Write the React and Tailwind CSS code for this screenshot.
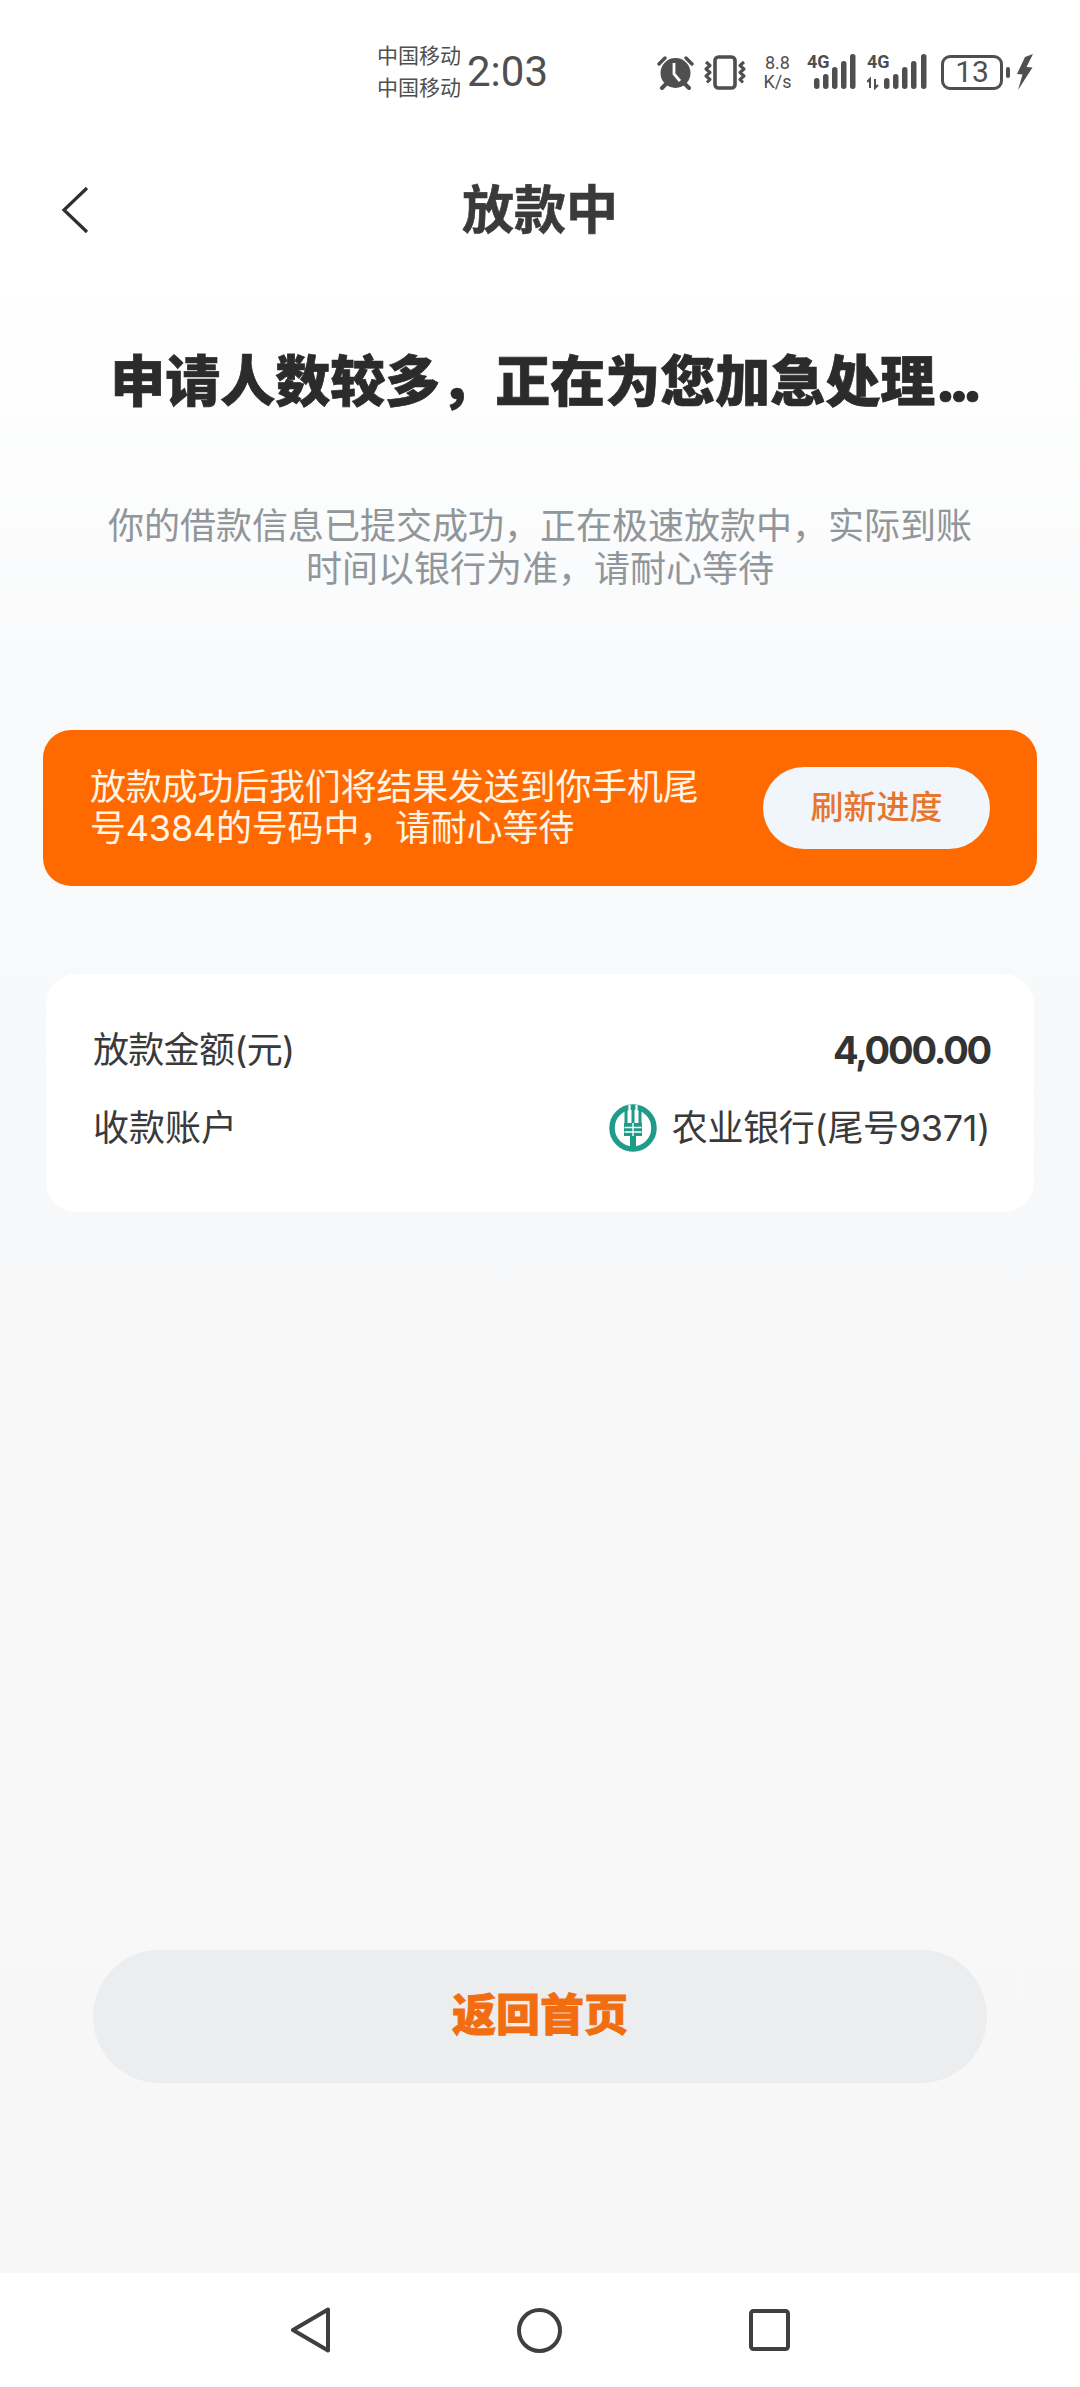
const cjk = "font-['Inter','Noto_Sans_CJK_SC',sans-serif]";

function Alarm() {
  return (
    <svg width="37" height="35" viewBox="0 0 37 35" fill="none">
      <circle cx="18.500" cy="18" r="15" fill="#4f4f4f" />
      <path d="M17 8v11l6 7" stroke="#fff" strokeWidth="2.800" fill="none" />
      <path d="M2 9 8 3M35 9 29 3" stroke="#4f4f4f" strokeWidth="3.400" strokeLinecap="round" />
      <path d="M9 29l-4 4M28 29l4 4" stroke="#4f4f4f" strokeWidth="4" strokeLinecap="round" />
    </svg>
  );
}

function Vibrate() {
  return (
    <svg width="42" height="35" viewBox="0 0 42 35" fill="none" stroke="#4f4f4f">
      <rect x="11" y="2" width="20" height="31" rx="3.500" strokeWidth="3.600" />
      <path d="M2 7l4 3.500-4 3.500 4 3.500-4 3.500 4 3.500-3 3" strokeWidth="3" strokeLinejoin="round" />
      <path d="M40 7l-4 3.500 4 3.500-4 3.500 4 3.500-4 3.500 3 3" strokeWidth="3" strokeLinejoin="round" />
    </svg>
  );
}

function Signal({ width, bars, arrows }) {
  return (
    <div className="relative h-[36px]" style={{ width }}>
      <span className="absolute left-0 top-[-2px] font-['Roboto',sans-serif] text-[18px] leading-[20px] font-bold text-[#4f4f4f]">4G</span>
      <svg className="absolute left-0 top-0" width={width} height="36" viewBox={`0 0 ${width} 36`} fill="#4f4f4f">
        {arrows && <path d="M3 34v-9l-3 3M8 25v9l3-3" stroke="#4f4f4f" strokeWidth="2" fill="none" />}
        {bars.map(([x, h]) => (
          <rect key={x} x={x} y={35 - h} width="5.500" height={h} rx="2.700" />
        ))}
      </svg>
    </div>
  );
}

function Battery() {
  return (
    <div className="flex items-center">
      <div className="flex h-[35px] w-[62px] items-center justify-center rounded-[9px] border-[3px] border-[#4f4f4f] font-['Roboto',sans-serif] text-[30px] leading-none text-[#4f4f4f]">
        13
      </div>
      <div className="ml-[3px] h-[11px] w-[4px] rounded-full bg-[#4f4f4f]" />
    </div>
  );
}

function Bolt() {
  return (
    <svg width="16" height="36" viewBox="0 0 16 36" fill="#4f4f4f">
      <path d="M16 0 9.500 13 15.500 13.500 1 36 5.500 20.500 0 20 8 3z" />
    </svg>
  );
}

function AbcLogo() {
  return (
    <svg width="48" height="48" viewBox="0 0 48 48" fill="none">
      <circle cx="24" cy="24" r="21" stroke="#1f9c89" strokeWidth="5.500" />
      <path d="M24 46V32" stroke="#1f9c89" strokeWidth="6" />
      <rect x="15" y="19" width="18" height="13" fill="#1f9c89" />
      <path d="M15.500 23.500h17M15.500 28h17M24 19v13" stroke="#fff" strokeWidth="1.400" />
      <path d="M17 3v16M31 3v16M24 1v18" stroke="#1f9c89" strokeWidth="3" />
      <path d="M20.500 1v15M27.500 1v15" stroke="#fff" strokeWidth="2.200" />
    </svg>
  );
}

export default function App() {
  return (
    <div className={`flex h-[2387px] w-[1080px] flex-col overflow-hidden bg-[linear-gradient(180deg,#ffffff_0%,#ffffff_12%,#f9fafb_28%,#f7f8f9_50%,#f7f7f8_100%)] ${cjk}`}>
      <div className="flex h-[144px] shrink-0 items-center pl-[377px]">
        <div className="flex flex-col text-[21px] leading-[32px] text-[#4f4f4f]">
          <span>中国移动</span>
          <span>中国移动</span>
        </div>
        <span className="ml-[6px] font-['Roboto',sans-serif] text-[42px] leading-none text-[#4f4f4f]">2:03</span>
        <div className="ml-[109px] flex items-center">
          <Alarm />
          <div className="ml-[10px]"><Vibrate /></div>
          <div className="ml-[15px] flex w-[33px] flex-col items-center font-['Roboto',sans-serif] text-[18px] leading-[19px] text-[#4f4f4f]">
            <span>8.8</span>
            <span>K/s</span>
          </div>
          <div className="ml-[13px]">
            <Signal width={49} bars={[[7, 11], [16, 15], [25, 22], [34, 28], [43, 35]]} />
          </div>
          <div className="ml-[11px]">
            <Signal width={61} bars={[[17, 11], [26, 15], [35, 22], [44, 28], [54, 35]]} arrows />
          </div>
          <div className="ml-[13px]"><Battery /></div>
          <div className="ml-[7px]"><Bolt /></div>
        </div>
      </div>

      <div className="relative flex h-[134px] shrink-0 items-center justify-center">
        <svg className="absolute left-[61px] top-[42px]" width="28" height="48" viewBox="0 0 28 48" fill="none">
          <path d="M26 2 3 24l23 22" stroke="#2f2f2f" strokeWidth="3.200" />
        </svg>
        <span className="text-[52px] leading-none font-bold text-[#3a3a3a] [-webkit-text-stroke:0.6px_#3a3a3a]">放款中</span>
      </div>

      <h1 className="mt-[68px] pl-[6px] text-center text-[55px] leading-[70px] font-black text-[#2b2b2b] [-webkit-text-stroke:0.7px_#2b2b2b]">
        申请人数较多，正在为您加急处理<span className="tracking-[-7px]">...</span>
      </h1>

      <p className="mx-auto mt-[89px] w-[880px] text-center text-[36px] leading-[43px] text-[#90969a]">
        你的借款信息已提交成功，正在极速放款中，实际到账时间以银行为准，请耐心等待
      </p>

      <div className="mx-[43px] mt-[139px] flex h-[156px] shrink-0 items-center justify-between rounded-[28px] bg-[#ff6a00] pl-[47px] pr-[47px]">
        <p className="w-[620px] text-[36px] leading-[41px] tracking-[-0.2px] text-[#fff4e6]">
          放款成功后我们将结果发送到你手机尾号4384的号码中，请耐心等待
        </p>
        <div className="flex h-[82px] w-[227px] items-center justify-center rounded-full bg-[#f0f6fb] text-[33px] font-medium text-[#e8752c]">
          刷新进度
        </div>
      </div>

      <div className="mx-[46px] mt-[88px] flex h-[238px] shrink-0 flex-col justify-center gap-[32px] rounded-[30px] bg-white pb-[7px] pl-[47px] pr-[44px] text-[36px] leading-[44px] text-[#3a3a3a]">
        <div className="flex items-center justify-between">
          <span className="tracking-[-0.7px]">放款金额(元)</span>
          <span className="text-[38px] font-bold tracking-[-2.2px] text-[#333333]">4,000.00</span>
        </div>
        <div className="flex items-center justify-between">
          <span>收款账户</span>
          <span className="flex items-center gap-[15px]">
            <AbcLogo />
            <span className="tracking-[-0.3px]">农业银行(尾号9371)</span>
          </span>
        </div>
      </div>

      <div className="mx-[93px] mb-[190px] mt-auto flex h-[133px] shrink-0 items-center justify-center rounded-full bg-[#ebedef] text-[44px] font-black text-[#f26d0f] [-webkit-text-stroke:0.8px_#f26d0f]">
        <span className="mb-[3px]">返回首页</span>
      </div>

      <div className="flex h-[114px] shrink-0 items-center gap-[187px] bg-white pl-[291px]">
        <svg width="39" height="46" viewBox="0 0 39 46" fill="none">
          <path d="M37 2.500v41L2 23z" stroke="#3f3f3f" strokeWidth="4" strokeLinejoin="round" />
        </svg>
        <svg width="45" height="45" viewBox="0 0 45 45" fill="none">
          <circle cx="22.500" cy="22.500" r="20.500" stroke="#3f3f3f" strokeWidth="4" />
        </svg>
        <svg width="41" height="42" viewBox="0 0 41 42" fill="none">
          <rect x="2" y="2" width="37" height="38" rx="2.500" stroke="#3f3f3f" strokeWidth="4" />
        </svg>
      </div>
    </div>
  );
}
